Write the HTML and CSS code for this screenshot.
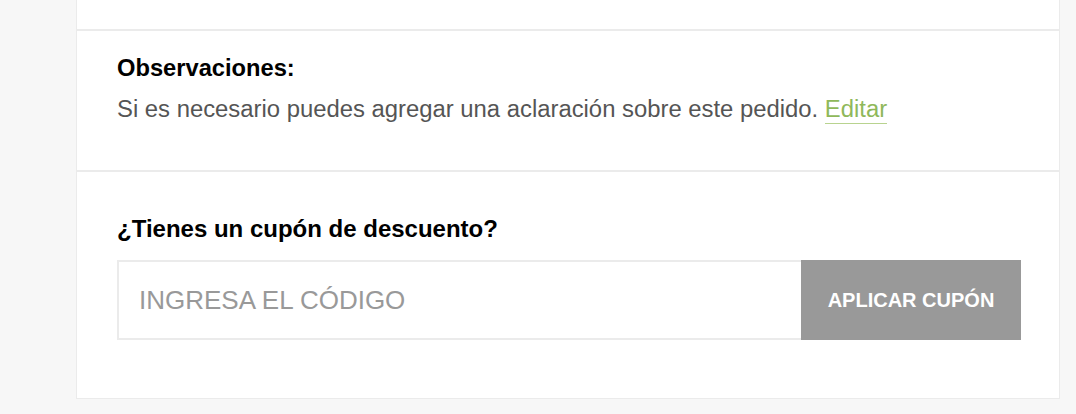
FILE: index.html
```html
<!DOCTYPE html>
<html>
<head>
  <meta charset="UTF-8" />
  <title>Carrito</title>
  <link rel="stylesheet" href="styles.css">
</head>
<body>

<div class="cart-card">
  <div class="cart-section cart-top"></div>

  <div class="cart-section notes">
    <h4 class="section-title">Observaciones:</h4>
    <p class="notes-text">Si es necesario puedes agregar una aclaración sobre este pedido. <a href="#" class="edit-link">Editar</a></p>
  </div>

  <div class="cart-section coupon">
    <h4 class="section-title coupon-title">¿Tienes un cupón de descuento?</h4>
    <form class="coupon-form">
      <input type="text" class="coupon-input" placeholder="INGRESA EL CÓDIGO" />
      <button type="button" class="coupon-btn">APLICAR CUPÓN</button>
    </form>
  </div>
</div>

</body>
</html>
```

FILE: styles.css
```css
body {
  margin: 0;
  background: #f7f7f7;
  font-family: 'Liberation Sans', Arial, sans-serif;
}

.cart-card {
  width: 982px;
  margin-left: 76px;
  background: #fff;
  border: 1px solid #ebebeb;
  border-top: none;
}

.cart-section {
  border-bottom: 2px solid #ebebeb;
  padding: 0 40px;
}

.cart-section:last-child {
  border-bottom: none;
}

.cart-top {
  height: 29px;
}

.notes {
  padding-top: 23px;
  padding-bottom: 47px;
}

.section-title {
  margin: 0;
  font-size: 23.7px;
  line-height: 28px;
  font-weight: bold;
  color: #000;
}

.notes-text {
  margin: 13px 0 0;
  font-size: 23.85px;
  line-height: 28px;
  color: #555;
}

.edit-link {
  color: #8fb85a;
  text-decoration: none;
  border-bottom: 1px solid #b8d38f;
  padding-bottom: 1px;
}

.coupon {
  padding-top: 43px;
  padding-bottom: 58px;
}

.coupon-title {
  font-size: 24px;
}

.coupon-form {
  display: flex;
  margin-top: 17px;
  margin-right: -2px;
}

.coupon-input {
  flex: 1;
  height: 80px;
  box-sizing: border-box;
  border: 2px solid #ebebeb;
  border-right: none;
  padding: 0 20px;
  font-family: inherit;
  font-size: 26px;
  color: #333;
  outline: none;
}

.coupon-input::placeholder {
  color: #999;
}

.coupon-btn {
  width: 220px;
  height: 80px;
  border: none;
  background: #999;
  color: #fff;
  font-family: inherit;
  font-size: 20px;
  font-weight: bold;
}
```
